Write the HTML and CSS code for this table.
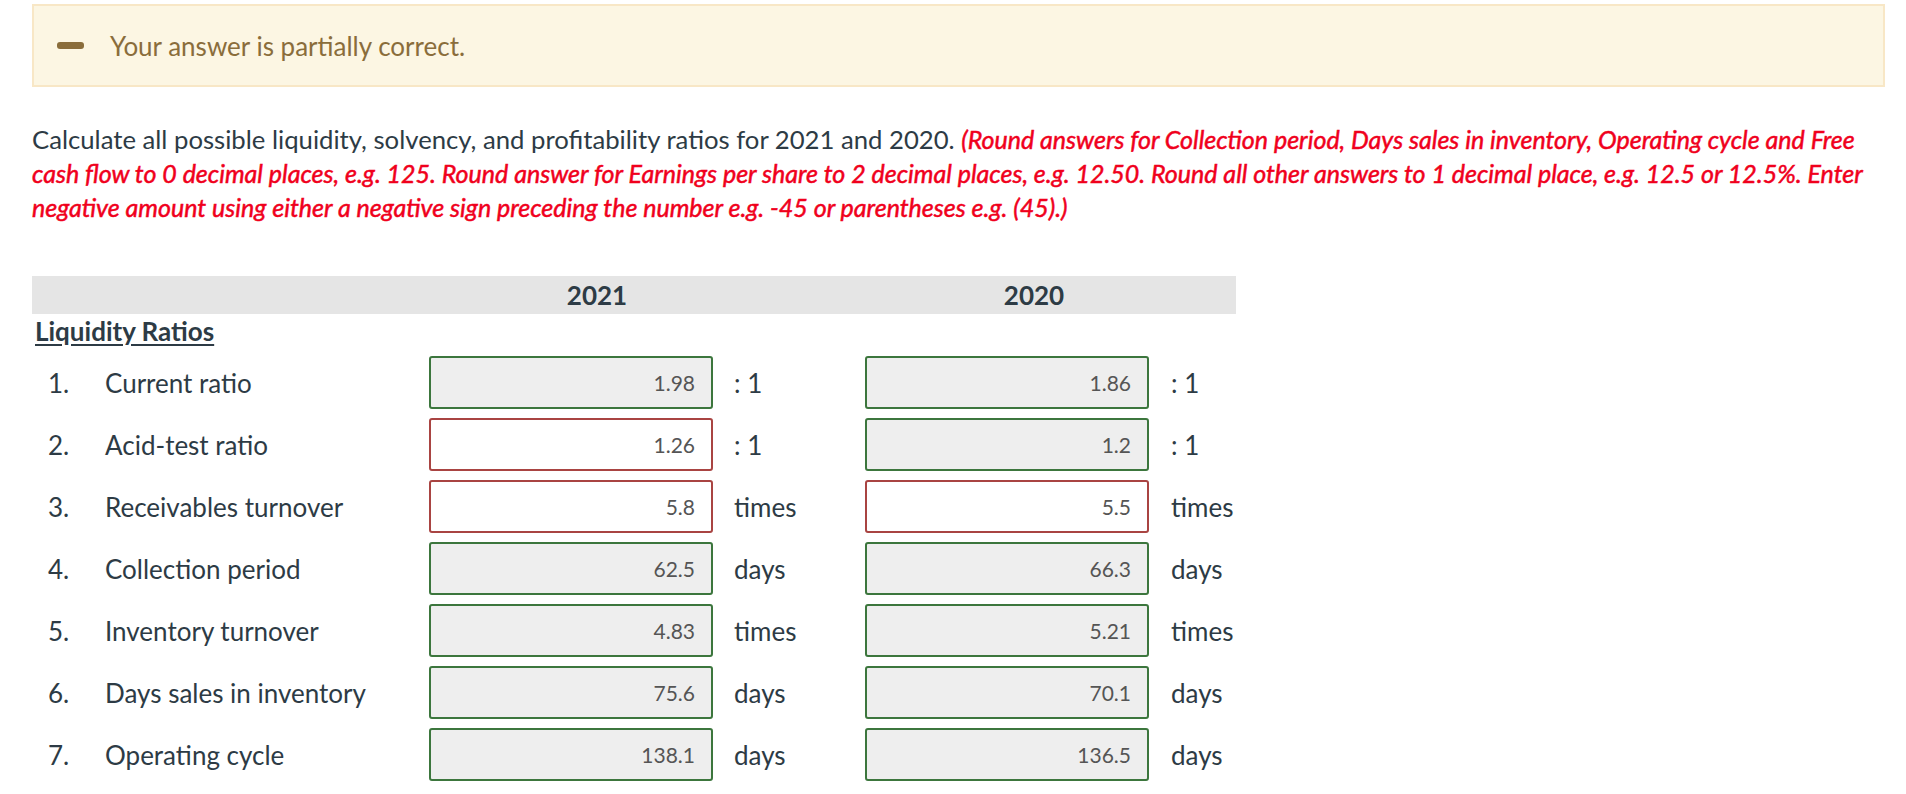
FILE: index.html
```html
<!DOCTYPE html>
<html lang="en">
<head>
<meta charset="utf-8">
<title>Ratios</title>
<link rel="stylesheet" href="styles.css">
</head>
<body>
<div class="page">
  <div class="feedback">
    <span class="dash"></span>
    <span class="feedback-text">Your answer is partially correct.</span>
  </div>

  <p class="question">Calculate all possible liquidity, solvency, and profitability ratios for 2021 and 2020. <em class="hint">(Round answers for Collection period, Days sales in inventory, Operating cycle and Free cash flow to 0 decimal places, e.g. 125. Round answer for Earnings per share to 2 decimal places, e.g. 12.50. Round all other answers to 1 decimal place, e.g. 12.5 or 12.5%. Enter negative amount using either a negative sign preceding the number e.g. -45 or parentheses e.g. (45).)</em></p>

  <div class="table">
    <div class="thead">
      <div></div>
      <div class="th">2021</div>
      <div></div>
      <div class="th">2020</div>
      <div></div>
    </div>
    <div class="section">Liquidity Ratios</div>

    <div class="row">
      <span class="num">1.</span><span class="label">Current ratio</span>
      <span class="box ok">1.98</span><span class="unit">: 1</span>
      <span class="box ok">1.86</span><span class="unit unit2">: 1</span>
    </div>
    <div class="row">
      <span class="num">2.</span><span class="label">Acid-test ratio</span>
      <span class="box bad">1.26</span><span class="unit">: 1</span>
      <span class="box ok">1.2</span><span class="unit unit2">: 1</span>
    </div>
    <div class="row">
      <span class="num">3.</span><span class="label">Receivables turnover</span>
      <span class="box bad">5.8</span><span class="unit">times</span>
      <span class="box bad">5.5</span><span class="unit unit2">times</span>
    </div>
    <div class="row">
      <span class="num">4.</span><span class="label">Collection period</span>
      <span class="box ok">62.5</span><span class="unit">days</span>
      <span class="box ok">66.3</span><span class="unit unit2">days</span>
    </div>
    <div class="row">
      <span class="num">5.</span><span class="label">Inventory turnover</span>
      <span class="box ok">4.83</span><span class="unit">times</span>
      <span class="box ok">5.21</span><span class="unit unit2">times</span>
    </div>
    <div class="row">
      <span class="num">6.</span><span class="label">Days sales in inventory</span>
      <span class="box ok">75.6</span><span class="unit">days</span>
      <span class="box ok">70.1</span><span class="unit unit2">days</span>
    </div>
    <div class="row">
      <span class="num">7.</span><span class="label">Operating cycle</span>
      <span class="box ok">138.1</span><span class="unit">days</span>
      <span class="box ok">136.5</span><span class="unit unit2">days</span>
    </div>
  </div>
</div>
</body>
</html>
```

FILE: styles.css
```css
html, body {
  margin: 0;
  padding: 0;
  background: #ffffff;
}

body {
  font-family: Lato, "Open Sans", sans-serif;
  color: #2d3b45;
  overflow: hidden;
}

.page {
  padding: 4px 21px 0 32px;
}

.feedback {
  box-sizing: border-box;
  height: 83px;
  background: #fcf6e3;
  border: 2px solid #f8e7c6;
  display: flex;
  align-items: center;
  padding-left: 23px;
  gap: 26px;
}

.dash {
  display: block;
  width: 27px;
  height: 7px;
  border-radius: 3px;
  background: #8a6d3b;
}

.feedback-text {
  font-size: 26px;
  color: #8a6d3b;
  line-height: 1;
}

.question {
  margin: 35px 0 0 0;
  font-size: 25.7px;
  line-height: 34px;
  max-width: 1853px;
}

.hint {
  color: #f0001c;
  font-style: italic;
  font-weight: 400;
  font-size: 25px;
  -webkit-text-stroke: 0.5px #f0001c;
}

.table {
  margin-top: 52px;
  width: 1204px;
}

.thead {
  display: grid;
  grid-template-columns: 397px 336px 100px 338px 33px;
  height: 38px;
  background: #e5e5e5;
  align-items: center;
}

.th {
  text-align: center;
  font-weight: 700;
  font-size: 26px;
}

.section {
  font-size: 26px;
  line-height: 34px;
  font-weight: 700;
  text-decoration: underline;
  text-underline-offset: 3px;
  padding-left: 3px;
  margin-bottom: 8px;
}

.row {
  display: grid;
  grid-template-columns: 73px 324px 284px 152px 284px auto;
  align-items: center;
  height: 53px;
  margin-bottom: 9px;
  font-size: 26px;
}

.num {
  padding-left: 16px;
}

.box {
  box-sizing: border-box;
  height: 53px;
  border: 2px solid #3c763d;
  border-radius: 3px;
  background: #eeeeee;
  color: #555555;
  font-size: 21px;
  display: flex;
  align-items: center;
  justify-content: flex-end;
  padding-right: 16px;
}

.box.bad {
  border-color: #a94442;
  background: #ffffff;
}

.unit {
  padding-left: 21px;
}

.unit2 {
  padding-left: 22px;
}
```
